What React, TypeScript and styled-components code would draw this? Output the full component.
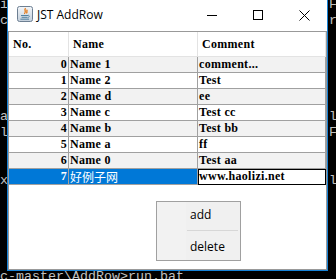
import React from "react";
import styled, { createGlobalStyle } from "styled-components";

const GlobalStyle = createGlobalStyle`
  html, body { margin: 0; padding: 0; background: #000; }
  body { width: 336px; height: 279px; overflow: hidden; }
`;

const Screen = styled.div`
  position: relative;
  width: 336px;
  height: 279px;
  overflow: hidden;
  background: #000;
`;

// console behind the window
const Console = styled.div`
  margin-top: -3px;
  font-family: "Liberation Mono", monospace;
  font-size: 13.33px;
  line-height: 16px;
  color: #c0c0c0;
`;

const ConsoleLine = styled.div`
  display: flex;
  justify-content: space-between;
  height: 16px;
  white-space: pre;
  overflow: hidden;
`;

const Edge = styled.span`
  width: 7px;
  overflow: hidden;
`;

const Window = styled.div`
  position: absolute;
  left: 7px;
  top: -1px;
  width: 321px;
  height: 272px;
  box-sizing: border-box;
  border: 1px solid #1883d7;
  background: #fff;
  display: flex;
  flex-direction: column;
`;

const TitleBar = styled.div`
  height: 31px;
  flex: none;
  display: flex;
  align-items: flex-start;
  padding-left: 9px;
`;

const AppIcon = styled.svg`
  margin-top: 6px;
  flex: none;
`;

const Title = styled.span`
  margin-left: 4px;
  height: 30px;
  line-height: 30px;
  font-family: "Open Sans", "Noto Sans", sans-serif;
  font-size: 12px;
  color: #000;
  flex: 1;
`;

const CaptionButton = styled.div`
  width: 46px;
  height: 30px;
  display: flex;
  align-items: center;
  justify-content: center;
`;

const ContentPane = styled.div`
  flex: 1;
  border: 1px solid #999;
  background: #fff;
`;

const GridRow = styled.div<{ $shade?: boolean }>`
  display: grid;
  grid-template-columns: 60px 129px 128px;
  background: ${(p) => (p.$shade ? "#f2f2f2" : "#fff")};
`;

const HeadCell = styled.div`
  height: 25px;
  box-sizing: border-box;
  border-right: 1px solid #e3e3e3;
  border-bottom: 1px solid #e3e3e3;
  padding-left: 4px;
  display: flex;
  align-items: center;
  font-family: "Liberation Serif", serif;
  font-weight: bold;
  font-size: 12px;
  letter-spacing: 0.3px;
  color: #000;
`;

const Cell = styled.div<{ $right?: boolean; $selected?: boolean; $focus?: boolean }>`
  height: 16px;
  box-sizing: border-box;
  border-right: 1px solid #a0a0a0;
  border-bottom: 1px solid #a0a0a0;
  padding: 0 1px;
  display: flex;
  align-items: center;
  justify-content: ${(p) => (p.$right ? "flex-end" : "flex-start")};
  font-family: "Liberation Serif", serif;
  font-weight: bold;
  font-size: 12px;
  letter-spacing: 0.3px;
  white-space: pre;
  color: ${(p) => (p.$selected ? "#fff" : "#000")};
  background: ${(p) => (p.$selected ? "#0078d7" : p.$focus ? "#fff" : "transparent")};
  outline: ${(p) => (p.$focus ? "1px solid #000" : "none")};
  outline-offset: -1px;
`;

const Cjk = styled.span`
  font-family: "Noto Sans CJK SC", sans-serif;
  font-weight: normal;
  font-size: 12px;
  letter-spacing: 0;
`;

const Menu = styled.div`
  position: absolute;
  left: 148px;
  top: 201px;
  width: 85px;
  box-sizing: border-box;
  border: 1px solid #a0a0a0;
  padding: 2px;
  background: linear-gradient(to right, #f2f2f2 0 29px, #f0f0f0 29px);
`;

const MenuItem = styled.div`
  height: 22px;
  line-height: 22px;
  padding-left: 31px;
  font-family: "Open Sans", "Noto Sans", sans-serif;
  font-size: 12px;
  color: #000;
`;

const Separator = styled.div`
  height: 1px;
  margin: 4px 0 5px 28px;
  background: #d7d7d7;
`;

const consoleLines: [string, string][] = [
  ["ia", "F"], ["co", "r"], ["", ""], ["", ""], ["", ""], ["", ""], ["", ""],
  ["a:", "lc"], ["la", "F"], ["", ""], ["", ""], ["x", "l"], ["", ""],
  ["", ""], ["", ""], ["", ""], ["", ""],
];

const rows: [string, string, string][] = [
  ["0", "Name 1", "comment..."],
  ["1", "Name 2", "Test"],
  ["2", "Name d", "ee"],
  ["3", "Name c", "Test cc"],
  ["4", "Name b", "Test bb"],
  ["5", "Name a", "ff"],
  ["6", "Name 0", "Test aa"],
  ["7", "好例子网", "www.haolizi.net"],
];

const JavaIcon = () => (
  <AppIcon width="16" height="16" viewBox="0 0 16 16">
    <defs>
      <linearGradient id="jbg" x1="0" y1="0" x2="0" y2="1">
        <stop offset="0" stopColor="#f3f6f9" />
        <stop offset="1" stopColor="#c3cfdb" />
      </linearGradient>
    </defs>
    <rect x="0.5" y="0.5" width="15" height="15" rx="2" fill="url(#jbg)" stroke="#6d7f92" />
    <path d="M8.6 2.2c-2.2 1.8 1.4 3-1.2 5.6M10.3 3.8c-1.3 1.2.6 2-.9 3.6" stroke="#e76f00" strokeWidth="1.2" fill="none" />
    <path d="M4 9.5h7M4.6 11.3h5.8M3.4 13.2h8.6" stroke="#5382a1" strokeWidth="1" fill="none" />
    <path d="M11 9.3c1.8-.2 1.8 1.9-.4 2.4" stroke="#5382a1" strokeWidth="0.9" fill="none" />
  </AppIcon>
);

export default function App() {
  return (
    <Screen>
      <GlobalStyle />
      <Console>
        {consoleLines.map(([l, r], i) => (
          <ConsoleLine key={i}>
            <Edge>{l}</Edge>
            <Edge>{r}</Edge>
          </ConsoleLine>
        ))}
        <ConsoleLine>c-master\AddRow&gt;run.bat</ConsoleLine>
      </Console>

      <Window>
        <TitleBar>
          <JavaIcon />
          <Title>JST AddRow</Title>
          <CaptionButton>
            <svg width="10" height="10" viewBox="0 0 10 10">
              <path d="M0 5.5h10" stroke="#000" strokeWidth="1" />
            </svg>
          </CaptionButton>
          <CaptionButton>
            <svg width="10" height="10" viewBox="0 0 10 10">
              <rect x="0.5" y="0.5" width="9" height="9" stroke="#000" strokeWidth="1" fill="none" />
            </svg>
          </CaptionButton>
          <CaptionButton>
            <svg width="11" height="11" viewBox="0 0 11 11">
              <path d="M0.5 0.5l10 10M10.5 0.5l-10 10" stroke="#000" strokeWidth="1" />
            </svg>
          </CaptionButton>
        </TitleBar>

        <ContentPane>
          <GridRow>
            <HeadCell>No.</HeadCell>
            <HeadCell>Name</HeadCell>
            <HeadCell>Comment</HeadCell>
          </GridRow>
          {rows.map(([no, name, comment], i) => {
            const sel = i === 7;
            return (
              <GridRow key={no} $shade={i % 2 === 0 && !sel}>
                <Cell $right $selected={sel}>{no}</Cell>
                <Cell $selected={sel}>{sel ? <Cjk>{name}</Cjk> : name}</Cell>
                <Cell $focus={sel}>{comment}</Cell>
              </GridRow>
            );
          })}
        </ContentPane>

        <Menu>
          <MenuItem>add</MenuItem>
          <Separator />
          <MenuItem>delete</MenuItem>
        </Menu>
      </Window>
    </Screen>
  );
}
